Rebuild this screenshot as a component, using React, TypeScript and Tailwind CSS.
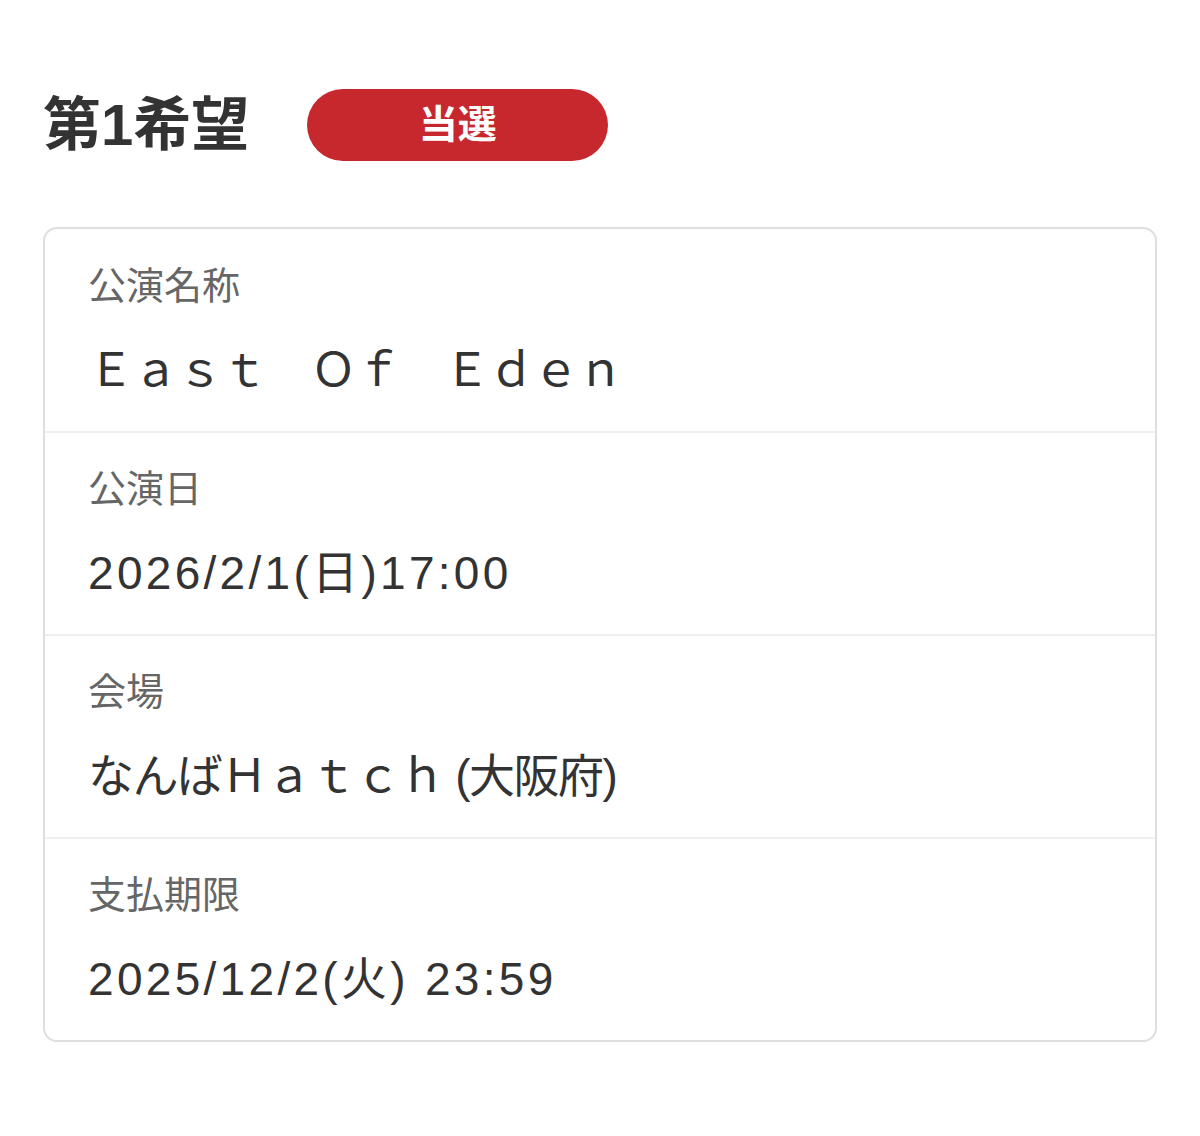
import React from "react";

type Row = {
  label: string;
  value: string;
  wide?: boolean;
};

const rows: Row[] = [
  { label: "公演名称", value: "Ｅａｓｔ　Ｏｆ　Ｅｄｅｎ" },
  { label: "公演日", value: "2026/2/1(日)17:00", wide: true },
  { label: "会場", value: "なんばＨａｔｃｈ (大阪府)" },
  { label: "支払期限", value: "2025/12/2(火) 23:59", wide: true },
];

const font = {
  fontFamily: '"Liberation Sans", "Noto Sans CJK JP", sans-serif',
};

export default function App() {
  return (
    <div className="min-h-[1136px] bg-white px-[43px] pt-[89px]" style={font}>
      <div className="flex items-center">
        <h2 className="text-[58px] font-bold leading-none text-[#333333]">第1希望</h2>
        <span className="ml-[58px] flex h-[72px] w-[301px] items-center justify-center rounded-full bg-[#c7282d] text-[39px] font-bold text-white">
          当選
        </span>
      </div>

      <div className="mt-[66px] overflow-hidden rounded-[14px] border-2 border-[#dedede]">
        {rows.map((row, i) => (
          <div
            key={row.label}
            className={`px-[43px] pb-[33px] ${i === 0 ? "pt-[29px]" : "pt-[28px] border-t-2 border-[#efefef]"}`}
          >
            <p className="text-[38px] leading-[56px] text-[#666666]">{row.label}</p>
            <p
              className={`mt-[28px] text-[46px] leading-[56px] text-[#333333] ${row.wide ? "tracking-[3.3px]" : "tracking-[-1.5px]"}`}
            >
              {row.value}
            </p>
          </div>
        ))}
      </div>
    </div>
  );
}
